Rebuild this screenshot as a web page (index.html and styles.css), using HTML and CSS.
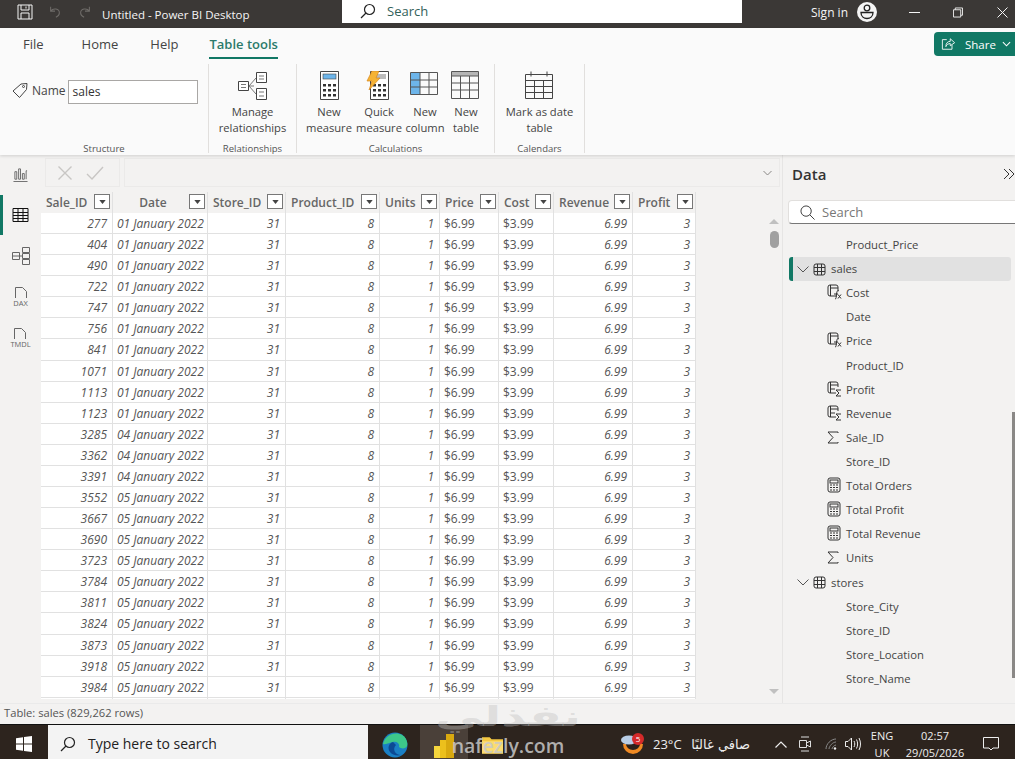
FILE: index.html
```html
<!DOCTYPE html>
<html lang="en">

<head>
    <meta charset="UTF-8">
    <meta name="viewport" content="width=device-width, initial-scale=1.0">
    <title>Untitled - Power BI Desktop</title>
    <link rel="stylesheet" href="styles.css">
</head>

<body>
    <svg class="defs" width="0" height="0">
        <symbol id="calc" viewBox="0 0 14 16">
            <rect x="1" y="1" width="12" height="14" rx="2" fill="none" stroke="#333"/>
            <rect x="3" y="3" width="8" height="3" fill="none" stroke="#333"/>
            <path d="M3 8h2M6 8h2M9 8h2M3 10.5h2M6 10.5h2M9 10.5h2M3 13h2M6 13h2M9 13h2" stroke="#333"/>
        </symbol>
        <symbol id="tbl" viewBox="0 0 13 13">
            <rect x="1" y="1" width="11" height="11" rx="2" fill="none" stroke="#333"/>
            <path d="M1 4.5h11M1 8.5h11M4.500 1v11M8.500 1v11" stroke="#333"/>
        </symbol>
        <symbol id="fx" viewBox="0 0 15 16">
            <path d="M10 12H3a2 2 0 0 1-2-2V3a2 2 0 0 1 2-2h6a2 2 0 0 1 2 2v4M3.500 1v11M3.500 4H11" fill="none" stroke="#333"/>
            <path d="M8 15c1.500 0 1-2 1.500-5S10.500 6 12 7M7 10h4" fill="none" stroke="#333"/>
            <path d="M11 10.500l3 4M14 10.500l-3 4" stroke="#333"/>
        </symbol>
        <symbol id="sumcol" viewBox="0 0 15 16">
            <path d="M9 12H3a2 2 0 0 1-2-2V3a2 2 0 0 1 2-2h6a2 2 0 0 1 2 2v3M3.500 1v11M3.500 4H11M3.500 8H8" fill="none" stroke="#333"/>
            <path d="M14 9H9l3 3-3 3h5" fill="none" stroke="#333"/>
        </symbol>
        <symbol id="sigma" viewBox="0 0 12 13">
            <path d="M11 2V1H1l5 5.500L1 12h10v-1" fill="none" stroke="#333"/>
        </symbol>
        <symbol id="arrowdown" viewBox="0 0 8 5">
            <path d="M0 0h8L4 5z" fill="#444"/>
        </symbol>
    </svg>

    <header class="titlebar">
        <div class="quick">
            <svg class="save-icon" viewBox="0 0 16 16"><path d="M1 1h14v14H1zM4 1v5h8V1M4 15v-6h8v6M9 2.500v2" fill="none" stroke="#f5f5f5"/></svg>
            <svg class="undo-icon" viewBox="0 0 16 16"><path d="M3 2v5h5M3 7c3-4 10-3 10 2 0 3-2 4-4 5" fill="none" stroke="#6e6b68" stroke-width="1.200"/></svg>
            <svg class="redo-icon" viewBox="0 0 16 16"><path d="M13 2v5H8M13 7C10 3 3 4 3 9c0 3 2 4 4 5" fill="none" stroke="#6e6b68" stroke-width="1.200"/></svg>
            <span class="doc-title">Untitled - Power BI Desktop</span>
        </div>
        <div class="top-search">
            <svg class="search-icon" viewBox="0 0 16 16"><circle cx="9.500" cy="6.500" r="5" fill="none" stroke="#222" stroke-width="1.200"/><path d="M6 10l-5 5" stroke="#222" stroke-width="1.200"/></svg>
            <span>Search</span>
        </div>
        <div class="window-controls">
            <span class="signin">Sign in</span>
            <svg class="avatar" viewBox="0 0 20 20"><circle cx="10" cy="10" r="10" fill="#f5f5f5"/><circle cx="10" cy="6" r="2.800" fill="none" stroke="#222" stroke-width="1.300"/><path d="M4 10.500h12c0 4-3 6-6 6s-6-2-6-6z" fill="none" stroke="#222" stroke-width="1.300"/></svg>
            <svg class="ctl-min" viewBox="0 0 11 11"><path d="M0 5.500h11" stroke="#f5f5f5"/></svg>
            <svg class="ctl-max" viewBox="0 0 11 11"><path d="M.5 2.500h8v8h-8zM2.500 2.500v-2h8v8h-2" fill="none" stroke="#f5f5f5"/></svg>
            <svg class="ctl-close" viewBox="0 0 11 11"><path d="M.5.500l10 10M10.500.500l-10 10" stroke="#f5f5f5"/></svg>
        </div>
    </header>

    <section class="ribbon">
        <nav class="tabs">
            <span class="tab tab-file">File</span>
            <span class="tab tab-home">Home</span>
            <span class="tab tab-help">Help</span>
            <span class="tab tab-active">Table tools</span>
            <button class="share">
                <svg class="share-icon" viewBox="0 0 16 16"><path d="M6 3H1v11h11V9" fill="none" stroke="#fff"/><path d="M5 11c0-4 2-6 5-6V2l5 4.500L10 10V7.500C8 7.500 6 8.500 5 11z" fill="none" stroke="#fff"/></svg>
                Share
                <svg class="share-chev" viewBox="0 0 10 6"><path d="M1 1l4 4 4-4" fill="none" stroke="#fff" stroke-width="1.200"/></svg>
            </button>
        </nav>
        <div class="groups">
            <div class="group group-structure">
                <div class="group-body name-field">
                    <svg class="tag-icon" viewBox="0 0 16 16"><path d="M1 9l8-7 6-.500-.500 6-7 8z" fill="none" stroke="#444"/><circle cx="11.500" cy="4.500" r="1" fill="none" stroke="#444"/></svg>
                    <span class="name-label">Name</span>
                    <span class="name-input">sales</span>
                </div>
                <div class="group-label">Structure</div>
            </div>
            <div class="group group-rel">
                <div class="group-body">
                    <div class="cmd cmd-rel">
                        <svg class="cmd-icon" viewBox="0 0 30 30"><path d="M.5 10.500h10v9H.5zM18.500 1.500h10v10h-10zM18.500 17.500h10v11h-10z" fill="#fff" stroke="#444"/><path d="M3 13.500h5M3 16.500h5M21 5h5M21 8h5M21 21h5M21 25h5M11 15l7-8M11 15l7 8M11 15h5" fill="none" stroke="#777"/></svg>
                        <span>Manage<br>relationships</span>
                    </div>
                </div>
                <div class="group-label">Relationships</div>
            </div>
            <div class="group group-calc">
                <div class="group-body">
                    <div class="cmd cmd-new-measure">
                        <svg class="cmd-icon" viewBox="0 0 30 30"><path d="M6.500.500h18v28h-18z" fill="#fff" stroke="#444"/><rect x="9" y="3" width="13" height="5" fill="#6db5ea" stroke="#444" stroke-width=".6"/><path d="M9 13h3v2.500H9zM14 13h3v2.500h-3zM19 13h3v2.500h-3zM9 18h3v2.500H9zM14 18h3v2.500h-3zM19 18h3v2.500h-3zM9 23h3v2.500H9zM14 23h3v2.500h-3zM19 23h3v2.500h-3z" fill="#333"/></svg>
                        <span>New<br>measure</span>
                    </div>
                    <div class="cmd cmd-quick">
                        <svg class="cmd-icon" viewBox="0 0 30 30"><path d="M6.500.500h18v28h-18z" fill="#fff" stroke="#444"/><rect x="11" y="3" width="11" height="5" fill="#bbb"/><path d="M9 13h3v2.500H9zM14 13h3v2.500h-3zM19 13h3v2.500h-3zM9 18h3v2.500H9zM14 18h3v2.500h-3zM19 18h3v2.500h-3zM9 23h3v2.500H9zM14 23h3v2.500h-3zM19 23h3v2.500h-3z" fill="#333"/><path d="M8 0h7l-3 7h4L5 19l3-9H3z" fill="#f5b335" stroke="#d9861a" stroke-width=".7"/></svg>
                        <span>Quick<br>measure</span>
                    </div>
                    <div class="cmd cmd-column">
                        <svg class="cmd-icon" viewBox="0 0 30 30"><path d="M1 2h9v21H1z" fill="#6db5ea"/><path d="M.5 1.500h27v22H.5zM10 1.500v22M19 1.500v22M.5 9h27M.5 16h27" fill="none" stroke="#555"/></svg>
                        <span>New<br>column</span>
                    </div>
                    <div class="cmd cmd-table">
                        <svg class="cmd-icon" viewBox="0 0 30 30"><path d="M1 1h27v4H1z" fill="#b5b5b5"/><path d="M.5.500h27v27H.5zM9.500 5v22M18.500 5v22M.5 5h27M.5 12h27M.5 19h27" fill="none" stroke="#555"/></svg>
                        <span>New<br>table</span>
                    </div>
                </div>
                <div class="group-label">Calculations</div>
            </div>
            <div class="group group-cal">
                <div class="group-body">
                    <div class="cmd cmd-date">
                        <svg class="cmd-icon" viewBox="0 0 30 30"><path d="M.5 3.500h27v24H.5zM.5 9.500h27M.5 15.500h27M.5 21.500h27M9.500 9.500v18M18.500 9.500v18M6 .500v5M22 .500v5" fill="#fafafa" stroke="#444"/></svg>
                        <span>Mark as date<br>table</span>
                    </div>
                </div>
                <div class="group-label">Calendars</div>
            </div>
        </div>
    </section>

    <main class="workspace">
        <aside class="views">
            <svg class="view-icon" viewBox="0 0 16 16"><path d="M.5 15.500h15M2 13V5h2v8zM6 13V2h2v11zM10 13V7h2v6zM14 13V4h1" fill="none" stroke="#666"/></svg>
            <svg class="view-icon view-active" viewBox="0 0 16 16"><path d="M.5 1.500h15v13H.5zM.5 5.500h15M.5 8.500h15M.5 11.500h15M5.500 1.500v13M10.500 1.500v13" fill="none" stroke="#111"/></svg>
            <svg class="view-icon view-model" viewBox="0 0 18 18"><path d="M.5 5.500h7v7h-7zM10.500.500h7v5h-7zM10.500 6.500h7v5h-7zM10.500 12.500h7v5h-7zM.5 9h7M7.500 9h3" fill="none" stroke="#666"/></svg>
            <div class="file-icon">
                <svg viewBox="0 0 14 12"><path d="M1.500 11V.500h7l4 4V11" fill="none" stroke="#666"/></svg>
                <span>DAX</span>
            </div>
            <div class="file-icon">
                <svg viewBox="0 0 14 12"><path d="M1.500 11V.500h7l4 4V11" fill="none" stroke="#666"/></svg>
                <span>TMDL</span>
            </div>
        </aside>

        <div class="center">
            <div class="formula">
                <div class="formula-btns">
                    <svg class="f-x" viewBox="0 0 14 14"><path d="M.5.500l13 13M13.500.500l-13 13" stroke="#c8c6c4" stroke-width="1.400"/></svg>
                    <svg class="f-check" viewBox="0 0 18 14"><path d="M1 8l5 5L17 1" fill="none" stroke="#c8c6c4" stroke-width="1.400"/></svg>
                </div>
                <div class="formula-input">
                    <svg class="f-chev" viewBox="0 0 10 6"><path d="M1 1l4 4 4-4" fill="none" stroke="#8a8886"/></svg>
                </div>
            </div>

            <div class="grid-wrap">
                <div class="data-grid">
                    <div class="row head">
                        <div class="hcell">Sale_ID<i class="filter"><svg><use href="#arrowdown"/></svg></i></div>
                        <div class="hcell hcenter">Date<i class="filter"><svg><use href="#arrowdown"/></svg></i></div>
                        <div class="hcell">Store_ID<i class="filter"><svg><use href="#arrowdown"/></svg></i></div>
                        <div class="hcell">Product_ID<i class="filter"><svg><use href="#arrowdown"/></svg></i></div>
                        <div class="hcell">Units<i class="filter"><svg><use href="#arrowdown"/></svg></i></div>
                        <div class="hcell">Price<i class="filter"><svg><use href="#arrowdown"/></svg></i></div>
                        <div class="hcell">Cost<i class="filter"><svg><use href="#arrowdown"/></svg></i></div>
                        <div class="hcell">Revenue<i class="filter"><svg><use href="#arrowdown"/></svg></i></div>
                        <div class="hcell">Profit<i class="filter"><svg><use href="#arrowdown"/></svg></i></div>
                    </div>
                    <div class="row"><div>277</div><div class="date">01 January 2022</div><div>31</div><div>8</div><div>1</div><div class="money">$6.99</div><div class="money">$3.99</div><div>6.99</div><div>3</div></div>
                    <div class="row"><div>404</div><div class="date">01 January 2022</div><div>31</div><div>8</div><div>1</div><div class="money">$6.99</div><div class="money">$3.99</div><div>6.99</div><div>3</div></div>
                    <div class="row"><div>490</div><div class="date">01 January 2022</div><div>31</div><div>8</div><div>1</div><div class="money">$6.99</div><div class="money">$3.99</div><div>6.99</div><div>3</div></div>
                    <div class="row"><div>722</div><div class="date">01 January 2022</div><div>31</div><div>8</div><div>1</div><div class="money">$6.99</div><div class="money">$3.99</div><div>6.99</div><div>3</div></div>
                    <div class="row"><div>747</div><div class="date">01 January 2022</div><div>31</div><div>8</div><div>1</div><div class="money">$6.99</div><div class="money">$3.99</div><div>6.99</div><div>3</div></div>
                    <div class="row"><div>756</div><div class="date">01 January 2022</div><div>31</div><div>8</div><div>1</div><div class="money">$6.99</div><div class="money">$3.99</div><div>6.99</div><div>3</div></div>
                    <div class="row"><div>841</div><div class="date">01 January 2022</div><div>31</div><div>8</div><div>1</div><div class="money">$6.99</div><div class="money">$3.99</div><div>6.99</div><div>3</div></div>
                    <div class="row"><div>1071</div><div class="date">01 January 2022</div><div>31</div><div>8</div><div>1</div><div class="money">$6.99</div><div class="money">$3.99</div><div>6.99</div><div>3</div></div>
                    <div class="row"><div>1113</div><div class="date">01 January 2022</div><div>31</div><div>8</div><div>1</div><div class="money">$6.99</div><div class="money">$3.99</div><div>6.99</div><div>3</div></div>
                    <div class="row"><div>1123</div><div class="date">01 January 2022</div><div>31</div><div>8</div><div>1</div><div class="money">$6.99</div><div class="money">$3.99</div><div>6.99</div><div>3</div></div>
                    <div class="row"><div>3285</div><div class="date">04 January 2022</div><div>31</div><div>8</div><div>1</div><div class="money">$6.99</div><div class="money">$3.99</div><div>6.99</div><div>3</div></div>
                    <div class="row"><div>3362</div><div class="date">04 January 2022</div><div>31</div><div>8</div><div>1</div><div class="money">$6.99</div><div class="money">$3.99</div><div>6.99</div><div>3</div></div>
                    <div class="row"><div>3391</div><div class="date">04 January 2022</div><div>31</div><div>8</div><div>1</div><div class="money">$6.99</div><div class="money">$3.99</div><div>6.99</div><div>3</div></div>
                    <div class="row"><div>3552</div><div class="date">05 January 2022</div><div>31</div><div>8</div><div>1</div><div class="money">$6.99</div><div class="money">$3.99</div><div>6.99</div><div>3</div></div>
                    <div class="row"><div>3667</div><div class="date">05 January 2022</div><div>31</div><div>8</div><div>1</div><div class="money">$6.99</div><div class="money">$3.99</div><div>6.99</div><div>3</div></div>
                    <div class="row"><div>3690</div><div class="date">05 January 2022</div><div>31</div><div>8</div><div>1</div><div class="money">$6.99</div><div class="money">$3.99</div><div>6.99</div><div>3</div></div>
                    <div class="row"><div>3723</div><div class="date">05 January 2022</div><div>31</div><div>8</div><div>1</div><div class="money">$6.99</div><div class="money">$3.99</div><div>6.99</div><div>3</div></div>
                    <div class="row"><div>3784</div><div class="date">05 January 2022</div><div>31</div><div>8</div><div>1</div><div class="money">$6.99</div><div class="money">$3.99</div><div>6.99</div><div>3</div></div>
                    <div class="row"><div>3811</div><div class="date">05 January 2022</div><div>31</div><div>8</div><div>1</div><div class="money">$6.99</div><div class="money">$3.99</div><div>6.99</div><div>3</div></div>
                    <div class="row"><div>3824</div><div class="date">05 January 2022</div><div>31</div><div>8</div><div>1</div><div class="money">$6.99</div><div class="money">$3.99</div><div>6.99</div><div>3</div></div>
                    <div class="row"><div>3873</div><div class="date">05 January 2022</div><div>31</div><div>8</div><div>1</div><div class="money">$6.99</div><div class="money">$3.99</div><div>6.99</div><div>3</div></div>
                    <div class="row"><div>3918</div><div class="date">05 January 2022</div><div>31</div><div>8</div><div>1</div><div class="money">$6.99</div><div class="money">$3.99</div><div>6.99</div><div>3</div></div>
                    <div class="row"><div>3984</div><div class="date">05 January 2022</div><div>31</div><div>8</div><div>1</div><div class="money">$6.99</div><div class="money">$3.99</div><div>6.99</div><div>3</div></div>
                    <div class="row row-empty"><div></div><div></div><div></div><div></div><div></div><div></div><div></div><div></div><div></div></div>
                </div>
                <div class="vscroll">
                    <i class="arrow-up"></i>
                    <i class="thumb"></i>
                    <i class="arrow-down"></i>
                </div>
            </div>
        </div>

        <aside class="data-pane">
            <div class="pane-head">
                <span>Data</span>
                <svg class="collapse" viewBox="0 0 12 12"><path d="M1 1l5 5-5 5M6 1l5 5-5 5" fill="none" stroke="#333"/></svg>
            </div>
            <div class="pane-search">
                <svg viewBox="0 0 16 16"><circle cx="6.500" cy="6.500" r="5.500" fill="none" stroke="#333"/><path d="M10.500 10.500l5 5" stroke="#333"/></svg>
                <span>Search</span>
            </div>
            <ul class="fields">
                <li class="field">Product_Price</li>
                <li class="tbl tbl-selected">
                    <svg class="chev" viewBox="0 0 12 7"><path d="M.5.500L6 6 11.500.500" fill="none" stroke="#555"/></svg>
                    <svg class="tbl-icon"><use href="#tbl"/></svg>sales
                </li>
                <li class="field"><svg class="f-icon"><use href="#fx"/></svg>Cost</li>
                <li class="field">Date</li>
                <li class="field"><svg class="f-icon"><use href="#fx"/></svg>Price</li>
                <li class="field">Product_ID</li>
                <li class="field"><svg class="f-icon"><use href="#sumcol"/></svg>Profit</li>
                <li class="field"><svg class="f-icon"><use href="#sumcol"/></svg>Revenue</li>
                <li class="field"><svg class="f-icon f-sigma"><use href="#sigma"/></svg>Sale_ID</li>
                <li class="field">Store_ID</li>
                <li class="field"><svg class="f-icon f-calc"><use href="#calc"/></svg>Total Orders</li>
                <li class="field"><svg class="f-icon f-calc"><use href="#calc"/></svg>Total Profit</li>
                <li class="field"><svg class="f-icon f-calc"><use href="#calc"/></svg>Total Revenue</li>
                <li class="field"><svg class="f-icon f-sigma"><use href="#sigma"/></svg>Units</li>
                <li class="tbl">
                    <svg class="chev" viewBox="0 0 12 7"><path d="M.5.500L6 6 11.500.500" fill="none" stroke="#555"/></svg>
                    <svg class="tbl-icon"><use href="#tbl"/></svg>stores
                </li>
                <li class="field">Store_City</li>
                <li class="field">Store_ID</li>
                <li class="field">Store_Location</li>
                <li class="field">Store_Name</li>
            </ul>
            <i class="pane-scroll"></i>
        </aside>
    </main>

    <footer class="statusbar">Table: sales (829,262 rows)</footer>

    <div class="taskbar">
        <svg class="win-logo" viewBox="0 0 16 16"><path d="M0 2.200l7-1v6.300H0zM8 1l8-1v7.500H8zM0 8.500h7v6.300l-7-1zM8 8.500h8V16l-8-1z" fill="#fff"/></svg>
        <div class="task-search">
            <svg viewBox="0 0 16 16"><circle cx="9.500" cy="6.500" r="5" fill="none" stroke="#222" stroke-width="1.200"/><path d="M6 10l-5 5" stroke="#222" stroke-width="1.200"/></svg>
            <span>Type here to search</span>
        </div>
        <div class="task-apps">
            <svg class="edge" viewBox="0 0 26 26"><circle cx="13" cy="13" r="12.500" fill="#1a7fc4"/><path d="M1 12C3 3 13-1 20 3c4 2 6 7 5 11-1 3-6 3-8 1 1-3-2-6-6-5-5 1-8 3-10 2z" fill="#3dc78a"/><path d="M11 10c-4 1-6 6-3 10 2 3 7 4 11 3-6 0-9-6-5-10z" fill="#0c4a94"/></svg>
            <div class="app-active">
                <svg viewBox="0 0 20 26"><path d="M0 14h8v12H0z" fill="#f5d63d"/><path d="M6 8h8v18H6z" fill="#ecc01c"/><path d="M12 2h8v24h-8z" fill="#d9a90f"/></svg>
            </div>
            <svg class="folder" viewBox="0 0 22 18"><path d="M0 1h8l2 2h12v15H0z" fill="#f5c842"/><path d="M0 5h22v13H0z" fill="#fbdc71"/></svg>
        </div>
        <div class="tray">
            <svg class="weather" viewBox="0 0 26 24"><path d="M3 12a10 10 0 0 0 20 0z" fill="#f08a24"/><path d="M6 12a7 6 0 0 0 14 0z" fill="#2b211b"/><ellipse cx="9" cy="8" rx="8" ry="4.500" fill="#b8cde6"/></svg>
            <span class="weather-badge">5</span>
            <span class="temp">23°C</span>
            <span class="weather-text" dir="rtl" lang="ar">صافي غالبًا</span>
            <svg class="tray-chev" viewBox="0 0 12 7"><path d="M.5 6.500L6 1l5.500 5.500" fill="none" stroke="#eee" stroke-width="1.200"/></svg>
            <svg class="tray-cam" viewBox="0 0 12 16"><path d="M2 1h8M2 15h8M.5 4.500h7v7h-7zM7.500 7l4-2v6l-4-2" fill="none" stroke="#ddd"/></svg>
            <svg class="tray-wifi" viewBox="0 0 12 12"><path d="M1 11C1 6 6 1 11 1M4 11c0-3 4-7 7-7M7 11c0-1 2-4 4-4" fill="none" stroke="#888"/><circle cx="10" cy="10.500" r="1.200" fill="#eee"/></svg>
            <svg class="tray-vol" viewBox="0 0 16 14"><path d="M.5 4.500h2.500L6.500 1v12L3 9.500H.5zM9 4c1 2 1 4 0 6M11.500 2.500c1.500 3 1.500 6 0 9M14 1c2 4 2 8 0 12" fill="none" stroke="#eee"/></svg>
            <div class="lang"><span>ENG</span><span>UK</span></div>
            <div class="clock"><span>02:57</span><span>29/05/2026</span></div>
            <svg class="notify" viewBox="0 0 16 14"><path d="M.5.500h15v10.500H10l-2 2-2-2H.5z" fill="none" stroke="#eee"/></svg>
        </div>
    </div>

    <div class="watermark">
        <span class="wm-ar" dir="rtl" lang="ar">نفذلي</span>
        <span class="wm-en">nafezly.com</span>
    </div>
</body>

</html>
```

FILE: styles.css
```css
* {
    box-sizing: border-box;
}

html,
body {
    height: 100%;
}

body {
    margin: 0;
    display: flex;
    flex-direction: column;
    height: 759px;
    overflow: hidden;
    position: relative;
    font-family: "Open Sans", "DejaVu Sans", sans-serif;
    font-size: 12px;
    color: #444;
    background: #f3f2f1;
}

.defs {
    position: absolute;
}

svg {
    display: block;
    flex: none;
}

/* title bar */
.titlebar {
    height: 28px;
    flex: none;
    display: flex;
    background: #3b3836;
    color: #f5f5f5;
}

.quick {
    width: 342px;
    display: flex;
    align-items: center;
    padding: 0 0 4px 17px;
}

.save-icon {
    width: 16px;
    height: 16px;
}

.undo-icon {
    width: 14px;
    height: 14px;
    margin-left: 15px;
}

.redo-icon {
    width: 14px;
    height: 14px;
    margin-left: 16px;
}

.doc-title {
    margin: 5px 0 0 10px;
    font-size: 11.500px;
    white-space: nowrap;
}

.top-search {
    width: 400px;
    height: 23px;
    background: #fff;
    display: flex;
    align-items: center;
    padding: 0 0 2px 18px;
    color: #33615a;
    font-size: 13px;
}

.search-icon {
    width: 16px;
    height: 16px;
    margin-right: 11px;
}

.window-controls {
    flex: 1;
    display: flex;
    align-items: center;
    padding: 0 0 4px 69px;
}

.signin {
    font-size: 12px;
    width: 46px;
    white-space: nowrap;
}

.avatar {
    width: 20px;
    height: 20px;
}

.ctl-min {
    width: 11px;
    height: 11px;
    margin-left: 32px;
}

.ctl-max {
    width: 10px;
    height: 11px;
    margin-left: 33px;
}

.ctl-close {
    width: 11px;
    height: 11px;
    margin-left: 34px;
}

/* ribbon */
.ribbon {
    height: 127px;
    flex: none;
    background: #fafafa;
    box-shadow: 0 1px 3px rgba(0, 0, 0, 0.15);
    position: relative;
    z-index: 1;
}

.tabs {
    height: 32px;
    display: flex;
    align-items: flex-start;
    font-size: 13px;
    padding-top: 7px;
}

.tab {
    color: #444;
    line-height: 18px;
    white-space: nowrap;
}

.tab-file {
    margin-left: 23px;
}

.tab-home {
    margin-left: 38px;
}

.tab-help {
    margin-left: 32px;
}

.tab-active {
    margin-left: 31px;
    color: #2c7a6b;
    font-weight: 600;
    height: 24px;
    border-bottom: 2px solid #117865;
}

.share {
    margin-left: auto;
    margin-top: -3px;
    width: 81px;
    height: 24px;
    border: 0;
    border-radius: 4px 0 0 4px;
    background: #117865;
    color: #fff;
    font: 11.500px "Open Sans", sans-serif;
    display: flex;
    align-items: center;
    padding: 0 0 0 7px;
    white-space: nowrap;
}

.share-icon {
    width: 15px;
    height: 14px;
    margin-right: 9px;
}

.share-chev {
    width: 9px;
    height: 6px;
    margin-left: 6px;
}

.groups {
    height: 89px;
    margin-top: 4px;
    display: flex;
}

.group {
    border-right: 1px solid #e1dfdd;
    height: 89px;
}

.group-structure {
    width: 209px;
}

.group-rel {
    width: 88px;
}

.group-calc {
    width: 198px;
}

.group-cal {
    width: 90px;
}

.group-body {
    height: 77px;
    display: flex;
    padding-top: 7px;
}

.group-label {
    height: 12px;
    text-align: center;
    font-size: 9.500px;
    line-height: 16px;
    color: #555;
}

.name-field {
    align-items: flex-start;
    padding: 16px 0 0 12px;
}

.tag-icon {
    width: 16px;
    height: 16px;
    margin-top: 2px;
}

.name-label {
    margin-left: 4px;
    line-height: 22px;
}

.name-input {
    margin-left: 2px;
    width: 130px;
    height: 24px;
    border: 1px solid #a9a7a5;
    background: #fff;
    padding-left: 4px;
    line-height: 22px;
    color: #333;
}

.cmd {
    display: flex;
    flex-direction: column;
    align-items: center;
    text-align: center;
    line-height: 16px;
    font-size: 11.200px;
    color: #444;
    white-space: nowrap;
}

.cmd-icon {
    width: 30px;
    height: 30px;
    margin-bottom: 3px;
}

.cmd-rel {
    width: 87px;
}

.cmd-new-measure {
    width: 50px;
    margin-left: 7px;
}

.cmd-quick {
    width: 46px;
    margin-left: 2px;
}

.cmd-column {
    width: 46px;
}

.cmd-table {
    width: 36px;
}

.cmd-date {
    width: 89px;
}

/* main area */
.workspace {
    flex: 1;
    min-height: 0;
    display: flex;
}

.views {
    width: 41px;
    flex: none;
    display: flex;
    flex-direction: column;
    align-items: center;
    padding: 12px 0 0 0;
    position: relative;
}

.view-icon {
    width: 15px;
    height: 15px;
    margin-bottom: 25px;
}

.view-active {
    width: 17px;
    height: 16px;
    margin-bottom: 24px;
    overflow: visible;
}

.view-model {
    width: 18px;
    height: 18px;
    margin-bottom: 22px;
}

.views::before {
    content: "";
    position: absolute;
    left: 0;
    top: 40px;
    width: 3px;
    height: 40px;
    background: #117865;
}

.file-icon {
    height: 20px;
    margin-bottom: 21px;
    text-align: center;
    font-size: 7.500px;
    line-height: 8px;
    color: #666;
}

.file-icon svg {
    width: 14px;
    height: 12px;
    margin: 0 auto;
}

.center {
    width: 742px;
    flex: none;
    display: flex;
    flex-direction: column;
    border-right: 1px solid #e6e5e4;
}

.formula {
    height: 37px;
    flex: none;
    display: flex;
    padding: 3px 2px 5px 4px;
    gap: 4px;
}

.formula-btns {
    width: 75px;
    border: 1px solid #ebeae9;
    display: flex;
    align-items: center;
    padding-left: 12px;
    gap: 14px;
}

.f-x {
    width: 14px;
    height: 14px;
}

.f-check {
    width: 18px;
    height: 14px;
}

.formula-input {
    flex: 1;
    border: 1px solid #ebeae9;
    display: flex;
    align-items: center;
    justify-content: flex-end;
    padding-right: 6px;
}

.f-chev {
    width: 11px;
    height: 6px;
}

.grid-wrap {
    flex: 1;
    min-height: 0;
    display: flex;
    justify-content: space-between;
    align-items: flex-start;
}

.data-grid {
    width: 655px;
    height: 507px;
    overflow: hidden;
    background: #fff;
}

.row {
    display: grid;
    grid-template-columns: 72px 95px 78px 94px 60px 59px 55px 79px 63px;
    height: 21.080px;
    border-bottom: 1px solid #e1e1e1;
    font-style: italic;
    font-size: 12px;
    line-height: 21px;
    color: #555;
}

.row > div {
    text-align: right;
    padding-right: 5px;
    border-right: 1px solid #e1e1e1;
    white-space: nowrap;
    overflow: hidden;
}

.row > .date {
    text-align: left;
    padding: 0 0 0 4px;
}

.row > .money {
    text-align: left;
    padding: 0 0 0 4px;
    font-style: normal;
}

.row-empty {
    border-bottom: 0;
}

.row.head {
    height: 21px;
    font-style: normal;
    background: #f3f2f1;
    border-bottom: 0;
    font-weight: 600;
    line-height: 21px;
    color: #666;
}

.row.head > .hcell {
    position: relative;
    text-align: left;
    padding: 0 0 0 5px;
    border-right: 1px solid #e1e1e1;
}

.row.head > .hcenter {
    text-align: center;
    padding-right: 19px;
}

.filter {
    position: absolute;
    right: 2px;
    top: 2px;
    width: 16px;
    height: 15px;
    border: 1px solid #777;
    background: #fff;
    display: flex;
    align-items: center;
    justify-content: center;
}

.filter svg {
    width: 7px;
    height: 4px;
    overflow: visible;
}

.vscroll {
    width: 12px;
    height: 507px;
    margin-right: 1px;
    position: relative;
}

.arrow-up,
.arrow-down {
    position: absolute;
    left: 0;
    width: 0;
    height: 0;
    border: 5px solid transparent;
}

.arrow-up {
    top: 27px;
    border-top: 0;
    border-bottom: 5px solid #c0c0c0;
}

.arrow-down {
    bottom: 5px;
    border-bottom: 0;
    border-top: 5px solid #c0c0c0;
}

.thumb {
    position: absolute;
    left: 1px;
    top: 39px;
    width: 9px;
    height: 17px;
    border-radius: 5px;
    background: #a0a0a0;
}

/* data pane */
.data-pane {
    flex: 1;
    min-width: 0;
    position: relative;
    padding-left: 5px;
}

.pane-head {
    height: 45px;
    padding: 9px 0 0 4px;
    font-size: 15px;
    font-weight: 600;
    color: #333;
    position: relative;
}

.collapse {
    position: absolute;
    right: 0;
    top: 13px;
    width: 12px;
    height: 12px;
}

.pane-search {
    height: 24px;
    margin-right: -2px;
    background: #fff;
    border: 1px solid #e1dfdd;
    border-bottom-color: #777;
    border-radius: 4px 0 0 4px;
    display: flex;
    align-items: center;
    padding-left: 11px;
    color: #777;
    font-size: 13px;
}

.pane-search svg {
    width: 15px;
    height: 15px;
    margin-right: 7px;
}

.fields {
    list-style: none;
    margin: 9px 0 0;
    padding: 0;
    font-size: 11.300px;
    color: #444;
}

.fields li {
    height: 24.110px;
    line-height: 24px;
    display: flex;
    align-items: center;
    white-space: nowrap;
}

.field {
    padding-left: 58px;
    position: relative;
}

.f-icon {
    position: absolute;
    left: 39px;
    top: 3px;
    width: 15px;
    height: 16px;
}

.f-sigma {
    width: 12px;
    height: 13px;
    top: 5px;
}

.f-calc {
    width: 14px;
    height: 16px;
}

.tbl {
    padding-left: 8px;
    margin-left: 1px;
}

.tbl-selected {
    width: 222px;
    background: #e1e1e1;
    border-left: 4px solid #117865;
    border-radius: 3px;
    padding-left: 4px;
}

.chev {
    width: 12px;
    height: 7px;
}

.tbl-icon {
    width: 13px;
    height: 13px;
    margin: 0 5px 0 4px;
}

.pane-scroll {
    position: absolute;
    right: 0;
    top: 257px;
    width: 3px;
    height: 266px;
    background: #8a8886;
}

/* status bar */
.statusbar {
    height: 21px;
    flex: none;
    padding-left: 4px;
    font-size: 11.200px;
    line-height: 18px;
    color: #555;
    border-top: 1px solid #eaeaea;
}

/* taskbar */
.taskbar {
    height: 35px;
    flex: none;
    display: flex;
    align-items: center;
    background: #2d241e;
    border-top: 1px solid #111;
    color: #eee;
}

.win-logo {
    width: 16px;
    height: 16px;
    margin: 4px 16px 0;
}

.task-search {
    width: 320px;
    height: 34px;
    background: #f3f3f3;
    display: flex;
    align-items: center;
    padding: 3px 0 0 12px;
    color: #222;
    font-size: 14px;
}

.task-search svg {
    width: 16px;
    height: 16px;
    margin-right: 12px;
}

.task-apps {
    width: 252px;
    height: 34px;
    display: flex;
    align-items: center;
    padding-left: 14px;
}

.edge {
    width: 26px;
    height: 26px;
    margin-top: 6px;
}

.app-active {
    width: 48px;
    height: 34px;
    margin-left: 12px;
    background: #4a4039;
    display: flex;
    align-items: flex-end;
    padding-left: 14px;
}

.app-active svg {
    width: 20px;
    height: 26px;
    margin-bottom: 1px;
}

.folder {
    width: 21px;
    height: 18px;
    margin: 6px 0 0 14px;
}

.tray {
    flex: 1;
    height: 34px;
    display: flex;
    align-items: center;
    position: relative;
    padding-top: 4px;
    font-size: 12px;
}

.weather {
    width: 26px;
    height: 24px;
}

.weather-badge {
    position: absolute;
    left: 12px;
    top: 8px;
    width: 12px;
    height: 12px;
    border-radius: 50%;
    background: #d42a2a;
    color: #fff;
    font-size: 8px;
    line-height: 12px;
    text-align: center;
}

.temp {
    margin-left: 7px;
    font-size: 13px;
    width: 36px;
}

.weather-text {
    width: 61px;
    font-family: "DejaVu Sans", sans-serif;
    font-size: 13px;
    white-space: nowrap;
}

.tray-chev {
    width: 12px;
    height: 7px;
    margin-left: 25px;
}

.tray-cam {
    width: 12px;
    height: 16px;
    margin-left: 12px;
}

.tray-wifi {
    width: 12px;
    height: 12px;
    margin-left: 14px;
}

.tray-vol {
    width: 16px;
    height: 14px;
    margin-left: 8px;
}

.lang {
    width: 30px;
    margin-left: 6px;
    display: flex;
    flex-direction: column;
    align-items: center;
    font-size: 11px;
    line-height: 17px;
}

.clock {
    width: 74px;
    margin-left: 1px;
    display: flex;
    flex-direction: column;
    align-items: center;
    font-size: 11px;
    line-height: 17px;
}

.notify {
    width: 16px;
    height: 14px;
    margin-left: 11px;
}

/* site watermark over the screenshot */
.watermark {
    position: absolute;
    left: 438px;
    top: 700px;
    width: 140px;
    height: 59px;
    z-index: 5;
    text-align: center;
    pointer-events: none;
}

.wm-ar {
    display: block;
    height: 33px;
    font-family: "DejaVu Sans", sans-serif;
    font-weight: 700;
    font-size: 28px;
    line-height: 33px;
    color: rgba(190, 190, 190, 0.4);
    transform: scaleX(1.7);
}

.wm-en {
    display: block;
    font-family: "Open Sans", sans-serif;
    font-weight: 600;
    font-size: 19.500px;
    line-height: 26px;
    color: rgba(200, 200, 200, 0.85);
}
```
